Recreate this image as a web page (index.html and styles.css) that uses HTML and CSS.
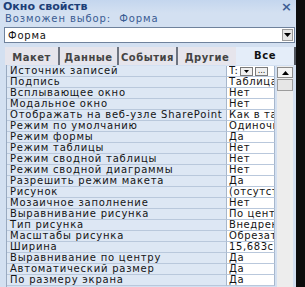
FILE: index.html
```html
<!DOCTYPE html>
<html lang="ru">
<head>
<meta charset="utf-8">
<link rel="stylesheet" href="styles.css">
</head>
<body>
<div class="panel">
  <div class="title"><span>Окно свойств</span><span class="close">×</span></div>
  <div class="subtitle">Возможен выбор:&nbsp; Форма</div>
  <div class="combo"><span class="combo-text">Форма</span><span class="combo-btn"><svg width="7" height="4" viewBox="0 0 7 4"><path d="M0 0h7L3.5 4z" fill="#000"/></svg></span></div>
  <div class="tabs">
    <div class="tab t1">Макет</div>
    <div class="tab t2">Данные</div>
    <div class="tab t3">События</div>
    <div class="tab t4">Другие</div>
    <div class="tab active">Все</div>
  </div>
  <div class="page">
    <div class="grid">
      <div class="lab">Источник записей</div><div class="val first"><span class="tv">T:</span><span class="mini dd"><svg width="5" height="3" viewBox="0 0 5 3"><path d="M0 0h5L2.5 3z" fill="#000"/></svg></span><span class="mini dots">...</span></div>
      <div class="lab">Подпись</div><div class="val">Таблица сотрудники</div>
      <div class="lab">Всплывающее окно</div><div class="val">Нет</div>
      <div class="lab">Модальное окно</div><div class="val">Нет</div>
      <div class="lab">Отображать на веб-узле SharePoint</div><div class="val">Как в таблице</div>
      <div class="lab">Режим по умолчанию</div><div class="val">Одиночная форма</div>
      <div class="lab">Режим формы</div><div class="val">Да</div>
      <div class="lab">Режим таблицы</div><div class="val">Нет</div>
      <div class="lab">Режим сводной таблицы</div><div class="val">Нет</div>
      <div class="lab">Режим сводной диаграммы</div><div class="val">Нет</div>
      <div class="lab">Разрешить режим макета</div><div class="val">Да</div>
      <div class="lab">Рисунок</div><div class="val">(отсутствует)</div>
      <div class="lab">Мозаичное заполнение</div><div class="val">Нет</div>
      <div class="lab">Выравнивание рисунка</div><div class="val">По центру</div>
      <div class="lab">Тип рисунка</div><div class="val">Внедренный</div>
      <div class="lab">Масштабы рисунка</div><div class="val">Обрезать</div>
      <div class="lab">Ширина</div><div class="val">15,683см</div>
      <div class="lab">Выравнивание по центру</div><div class="val">Да</div>
      <div class="lab">Автоматический размер</div><div class="val">Да</div>
      <div class="lab">По размеру экрана</div><div class="val">Да</div>
    </div>
    <div class="scroll">
      <div class="sbtn"><svg width="7" height="4" viewBox="0 0 7 4"><path d="M0 4h7L3.5 0z" fill="#000"/></svg></div>
      <div class="thumb"></div>
    </div>
  </div>
</div>
</body>
</html>
```
FILE: styles.css
```css
html, body {
  margin: 0;
  padding: 0;
}
body {
  width: 305px;
  height: 287px;
  background: #0c0c0c;
  overflow: hidden;
  font-family: "DejaVu Sans", Verdana, sans-serif;
}
.panel {
  width: 296px;
  height: 287px;
  background: #d3e0f1;
  overflow: hidden;
  display: flex;
  flex-direction: column;
}
.title {
  height: 13px;
  line-height: 13px;
  padding: 0 4px 0 3px;
  display: flex;
  justify-content: space-between;
  font-size: 11px;
  font-weight: bold;
  color: #1d3f78;
  background: linear-gradient(#c4d6ee, #d3e0f1);
}
.close {
  font-size: 13px;
  color: #3d5e93;
}
.subtitle {
  height: 12px;
  line-height: 12px;
  padding-left: 5px;
  font-size: 10px;
  color: #3a5c93;
  letter-spacing: 0.9px;
}
.combo {
  margin: 2px 1px 0 4px;
  height: 14px;
  border: 1px solid #6f829c;
  background: #fff;
  display: flex;
  justify-content: space-between;
  align-items: center;
}
.combo-text {
  padding-left: 3px;
  font-size: 10px;
  letter-spacing: 0.8px;
  color: #111;
}
.combo-btn {
  width: 11px;
  height: 12px;
  margin-right: 1px;
  background: #e4e4e4;
  border: 1px solid #9a9a9a;
  box-sizing: border-box;
  display: flex;
  align-items: center;
  justify-content: center;
}
.tabs {
  margin: 4px 0 0 5px;
  height: 18px;
  display: flex;
  align-items: stretch;
  font-size: 10px;
  letter-spacing: 0.5px;
  font-weight: bold;
  color: #444;
}
.tab {
  display: flex;
  align-items: center;
  justify-content: center;
  background: #e6e5ec;
  border-right: 2px solid #6e7480;
  padding-top: 2px;
  box-sizing: border-box;
}
.t1 { width: 55px; }
.t2 { width: 59px; }
.t3 { width: 59px; }
.t4 { width: 58px; border-right: 0; }
.tab.active {
  flex: 1;
  background: #e4edf9;
  color: #111;
  border-right: 2px solid #50555e;
  align-items: flex-start;
  padding-top: 3px;
}
.page {
  flex: 1;
  display: flex;
  margin-left: 6px;
  border-left: 1px solid #9aaac0;
  padding-top: 1px;
}
.grid {
  width: 268px;
  display: grid;
  grid-template-columns: 220px 48px;
  grid-auto-rows: 11px;
  align-content: start;
  font-size: 10px;
  letter-spacing: 0.78px;
}
.lab, .val {
  box-sizing: border-box;
  height: 11px;
  line-height: 10px;
  white-space: nowrap;
  overflow: hidden;
  border-bottom: 1px solid #b9c8dc;
  color: #141414;
}
.lab {
  background: #dde7f4;
  padding-left: 3px;
  border-right: 1px solid #a7b7cc;
}
.val {
  background: #fff;
  padding-left: 2px;
  letter-spacing: 0.6px;
  border-right: 1px solid #a7b7cc;
}
.val.first {
  display: flex;
  align-items: center;
  gap: 2px;
  background: #fff;
}
.tv {
  width: 9px;
  overflow: hidden;
}
.mini {
  height: 9px;
  width: 13px;
  box-sizing: border-box;
  border: 1px solid #7a7a7a;
  background: #f0f0f0;
  display: flex;
  align-items: center;
  justify-content: center;
  font-size: 8px;
  letter-spacing: 0;
  line-height: 6px;
}
.scroll {
  width: 16px;
  margin-left: 2px;
  background: #ededed;
  display: flex;
  flex-direction: column;
  gap: 1px;
}
.sbtn {
  height: 11px;
  border: 1px solid #8c8c8c;
  background: #f4f4f4;
  box-sizing: border-box;
  display: flex;
  align-items: center;
  justify-content: center;
  margin-top: 1px;
}
.thumb {
  height: 12px;
  border: 1px solid #9c9c9c;
  background: #e6e6e6;
  box-sizing: border-box;
}
```
